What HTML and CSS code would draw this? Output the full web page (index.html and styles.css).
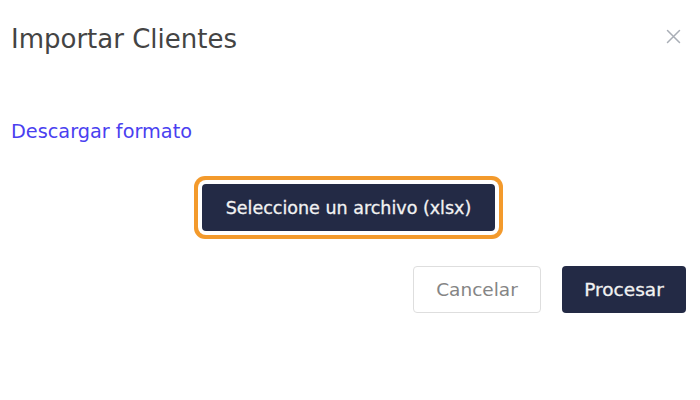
FILE: index.html
```html
<!DOCTYPE html>
<html lang="es">
<head>
    <meta charset="UTF-8">
    <meta name="viewport" content="width=device-width, initial-scale=1.0">
    <title>Importar Clientes</title>
    <link rel="stylesheet" href="styles.css">
</head>
<body>
    <div class="modal">
        <div class="modal-header">
            <h2>Importar Clientes</h2>
            <span class="close-btn" title="Cerrar">
                <svg width="15" height="15" viewBox="0 0 15 15">
                    <path d="M1.5 1.5 L13.5 13.5 M13.5 1.5 L1.5 13.5" stroke="#a9aeb6" stroke-width="1.5" stroke-linecap="round" fill="none"/>
                </svg>
            </span>
        </div>
        <div class="modal-body">
            <a href="#" class="download-link">Descargar formato</a>
            <div class="file-row">
                <button class="button button-dark button-focus">Seleccione un archivo (xlsx)</button>
            </div>
        </div>
        <div class="modal-footer">
            <button class="button button-light">Cancelar</button>
            <button class="button button-dark">Procesar</button>
        </div>
    </div>
</body>
</html>
```

FILE: styles.css
```css
* {
    margin: 0;
    padding: 0;
    box-sizing: border-box;
}
body {
    font-family: 'DejaVu Sans', 'Noto Sans', sans-serif;
    background: white;
    width: 700px;
    height: 400px;
}
.modal {
    padding: 0 14px 0 11px;
}
.modal-header {
    display: flex;
    justify-content: space-between;
    align-items: flex-start;
    padding-top: 22px;
}
.modal-header h2 {
    font-size: 26px;
    font-weight: 400;
    color: #444444;
    line-height: 34px;
}
.close-btn {
    display: flex;
    margin: 7px 5px 0 0;
    cursor: pointer;
}
.modal-body {
    padding-top: 64px;
}
.download-link {
    display: block;
    color: #4a3ff0;
    font-size: 19.3px;
    line-height: 24px;
    text-decoration: none;
}
.download-link:hover {
    text-decoration: underline;
}
.file-row {
    display: flex;
    justify-content: center;
    padding: 40px 0 35px;
}
.button {
    font-family: inherit;
    font-size: 18.5px;
    border-radius: 4px;
    height: 47px;
    cursor: pointer;
}
.button-dark {
    background-color: #232a45;
    color: #f2f2f2;
    border: none;
    -webkit-text-stroke: 0.3px #f2f2f2;
}
.button-focus {
    width: 293px;
    font-size: 17.5px;
    box-shadow: 0 0 0 4px #ffffff, 0 0 0 8px #f39a2c;
}
.button-light {
    background: white;
    color: #858585;
    border: 1px solid #dedede;
    width: 128px;
}
.modal-footer {
    display: flex;
    justify-content: flex-end;
    gap: 21px;
}
.modal-footer .button-dark {
    width: 124px;
}
```
